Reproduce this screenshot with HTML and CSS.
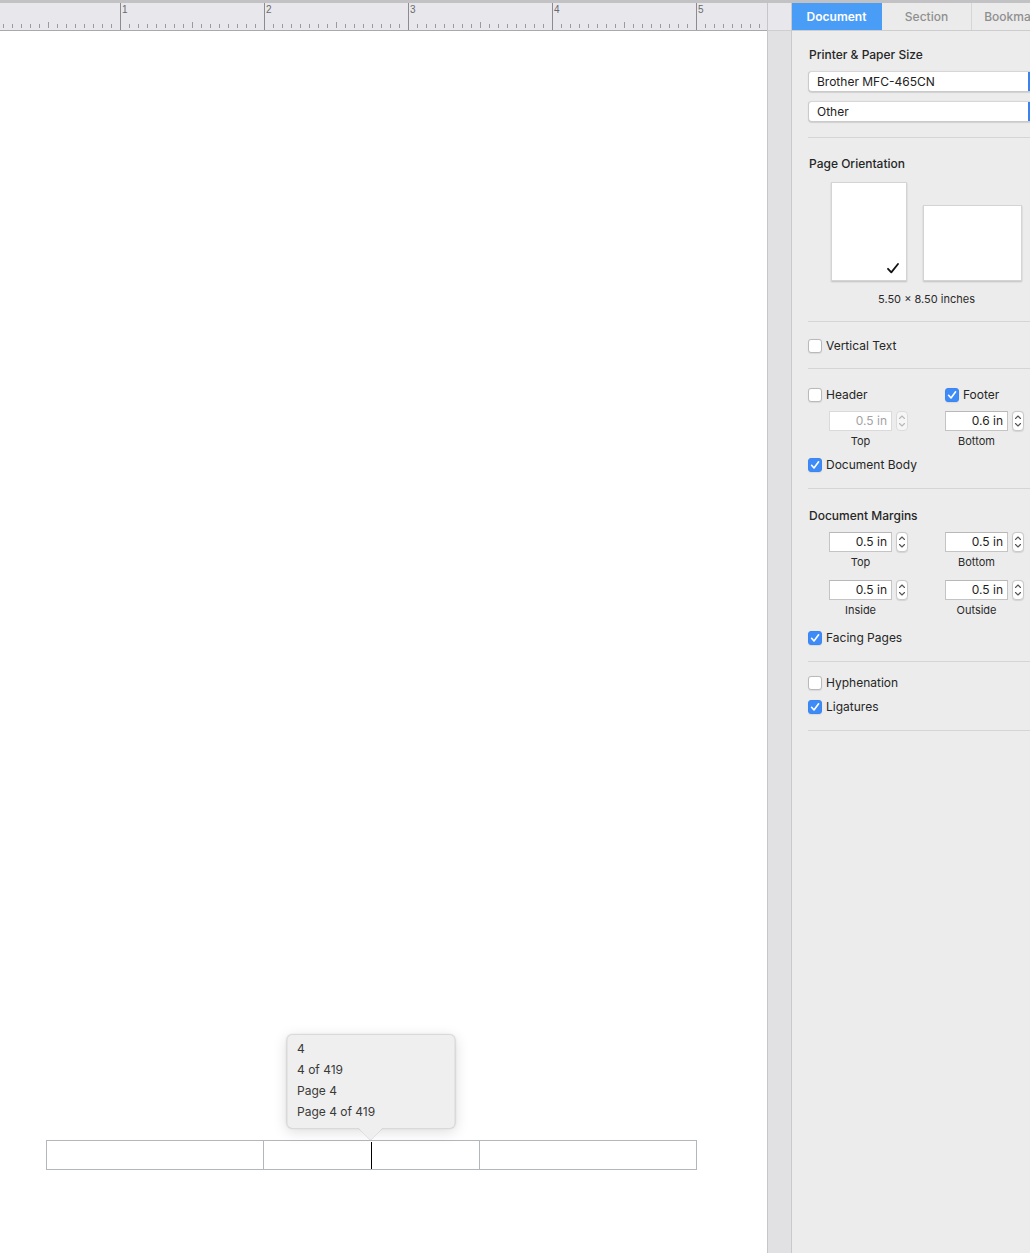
FILE: index.html
```html
<!DOCTYPE html>
<html>
<head>
<meta charset="utf-8">
<link rel="stylesheet" href="styles.css">
</head>
<body>
<div class="app">
  <div class="doc-col">
    <div class="ruler">
      <div class="ruler-lead"></div>
      <div class="inch"><span>1</span></div>
      <div class="inch"><span>2</span></div>
      <div class="inch"><span>3</span></div>
      <div class="inch"><span>4</span></div>
      <div class="inch last"><span>5</span></div>
    </div>
    <div class="page">
      <div class="footer-table">
        <div class="cell first"></div>
        <div class="cell mid">
          <span class="caret"></span>
          <div class="popover">
            <div class="pop-line">4</div>
            <div class="pop-line">4 of 419</div>
            <div class="pop-line">Page 4</div>
            <div class="pop-line">Page 4 of 419</div>
            <svg class="pop-arrow" width="24" height="12" viewBox="0 0 24 12"><path d="M0 0 L24 0 L13 11.5 Q12 12.5 11 11.5 Z" fill="#efefef"/><path d="M0 0.5 L11 11.5 Q12 12.5 13 11.5 L24 0.5" fill="none" stroke="rgba(0,0,0,0.08)" stroke-width="1"/></svg>
          </div>
        </div>
        <div class="cell last"></div>
      </div>
    </div>
  </div>
  <div class="gutter">
    <div class="gutter-top"></div>
  </div>
  <div class="panel">
    <div class="tabs">
      <div class="tab active">Document</div>
      <div class="tab">Section</div>
      <div class="tab">Bookmarks</div>
    </div>
    <div class="panel-body">
      <div class="title t-printer">Printer &amp; Paper Size</div>
      <div class="popup p1"><span class="popup-text">Brother MFC-465CN</span><span class="popup-arrow"></span></div>
      <div class="popup p2"><span class="popup-text">Other</span><span class="popup-arrow"></span></div>
      <div class="sep s1"></div>

      <div class="title t-orient">Page Orientation</div>
      <div class="orient">
        <div class="thumbs">
          <div class="thumb portrait">
            <svg class="tick" width="12" height="11" viewBox="0 0 12 11"><path d="M1 5.8 L4.3 9.4 L11 1" fill="none" stroke="#111" stroke-width="1.8" stroke-linecap="round" stroke-linejoin="round"/></svg>
          </div>
          <div class="thumb landscape"></div>
        </div>
        <div class="caption">5.50 × 8.50 inches</div>
      </div>
      <div class="sep s2"></div>

      <label class="check r-vertical"><span class="box"></span>Vertical Text</label>
      <div class="sep s3"></div>

      <div class="grid2 r-hf">
        <label class="check"><span class="box"></span>Header</label>
        <label class="check"><span class="box on"><svg width="14" height="14" viewBox="0 0 14 14"><path d="M3.6 7.3 L6 10 L10.6 3.8" fill="none" stroke="#fff" stroke-width="1.6" stroke-linecap="round" stroke-linejoin="round"/></svg></span>Footer</label>
      </div>
      <div class="grid2 r-fields1">
        <div class="fieldgroup indent">
          <div class="fieldrow"><span class="field disabled">0.5 in</span><span class="stepper dim"><svg width="12" height="20" viewBox="0 0 12 20"><path d="M3.5 7.5 L6 5 L8.5 7.5 M3.5 12.5 L6 15 L8.5 12.5" fill="none" stroke="#b8b8b8" stroke-width="1.1" stroke-linecap="round" stroke-linejoin="round"/></svg></span></div>
          <div class="flabel">Top</div>
        </div>
        <div class="fieldgroup">
          <div class="fieldrow"><span class="field">0.6 in</span><span class="stepper"><svg width="12" height="20" viewBox="0 0 12 20"><path d="M3.5 7.5 L6 5 L8.5 7.5 M3.5 12.5 L6 15 L8.5 12.5" fill="none" stroke="#555" stroke-width="1.1" stroke-linecap="round" stroke-linejoin="round"/></svg></span></div>
          <div class="flabel">Bottom</div>
        </div>
      </div>
      <label class="check r-body"><span class="box on"><svg width="14" height="14" viewBox="0 0 14 14"><path d="M3.6 7.3 L6 10 L10.6 3.8" fill="none" stroke="#fff" stroke-width="1.6" stroke-linecap="round" stroke-linejoin="round"/></svg></span>Document Body</label>
      <div class="sep s4"></div>

      <div class="title t-margins">Document Margins</div>
      <div class="grid2 r-fields2">
        <div class="fieldgroup indent">
          <div class="fieldrow"><span class="field">0.5 in</span><span class="stepper"><svg width="12" height="20" viewBox="0 0 12 20"><path d="M3.5 7.5 L6 5 L8.5 7.5 M3.5 12.5 L6 15 L8.5 12.5" fill="none" stroke="#555" stroke-width="1.1" stroke-linecap="round" stroke-linejoin="round"/></svg></span></div>
          <div class="flabel">Top</div>
        </div>
        <div class="fieldgroup">
          <div class="fieldrow"><span class="field">0.5 in</span><span class="stepper"><svg width="12" height="20" viewBox="0 0 12 20"><path d="M3.5 7.5 L6 5 L8.5 7.5 M3.5 12.5 L6 15 L8.5 12.5" fill="none" stroke="#555" stroke-width="1.1" stroke-linecap="round" stroke-linejoin="round"/></svg></span></div>
          <div class="flabel">Bottom</div>
        </div>
      </div>
      <div class="grid2 r-fields3">
        <div class="fieldgroup indent">
          <div class="fieldrow"><span class="field">0.5 in</span><span class="stepper"><svg width="12" height="20" viewBox="0 0 12 20"><path d="M3.5 7.5 L6 5 L8.5 7.5 M3.5 12.5 L6 15 L8.5 12.5" fill="none" stroke="#555" stroke-width="1.1" stroke-linecap="round" stroke-linejoin="round"/></svg></span></div>
          <div class="flabel">Inside</div>
        </div>
        <div class="fieldgroup">
          <div class="fieldrow"><span class="field">0.5 in</span><span class="stepper"><svg width="12" height="20" viewBox="0 0 12 20"><path d="M3.5 7.5 L6 5 L8.5 7.5 M3.5 12.5 L6 15 L8.5 12.5" fill="none" stroke="#555" stroke-width="1.1" stroke-linecap="round" stroke-linejoin="round"/></svg></span></div>
          <div class="flabel">Outside</div>
        </div>
      </div>
      <label class="check r-facing"><span class="box on"><svg width="14" height="14" viewBox="0 0 14 14"><path d="M3.6 7.3 L6 10 L10.6 3.8" fill="none" stroke="#fff" stroke-width="1.6" stroke-linecap="round" stroke-linejoin="round"/></svg></span>Facing Pages</label>
      <div class="sep s5"></div>

      <label class="check r-hyph"><span class="box"></span>Hyphenation</label>
      <label class="check r-lig"><span class="box on"><svg width="14" height="14" viewBox="0 0 14 14"><path d="M3.6 7.3 L6 10 L10.6 3.8" fill="none" stroke="#fff" stroke-width="1.6" stroke-linecap="round" stroke-linejoin="round"/></svg></span>Ligatures</label>
      <div class="sep s6"></div>
    </div>
  </div>
</div>
</body>
</html>
```
FILE: styles.css
```css
* { box-sizing: border-box; }
html, body { margin: 0; padding: 0; }
body {
  font-family: Inter, "Noto Sans", "Liberation Sans", sans-serif;
  font-size: 12px;
  color: #262626;
  background: #ececec;
  overflow: hidden;
}
.app {
  display: flex;
  width: 1030px;
  height: 1253px;
  border-top: 3px solid #c2c2c4;
  overflow: hidden;
}

/* document column */
.doc-col {
  width: 767px;
  flex: none;
  display: flex;
  flex-direction: column;
  background: #fff;
}
.ruler {
  height: 28px;
  flex: none;
  display: flex;
  overflow: hidden;
  border-bottom: 1px solid #a9a9ad;
  background-color: #e8e8ec;
  background-image:
    repeating-linear-gradient(to right, #9b9b9f 0 1px, transparent 1px 144px),
    repeating-linear-gradient(to right, #9b9b9f 0 1px, transparent 1px 9px);
  background-size: 864px 6px, 810px 4px;
  background-position: 48px calc(100% - 2px), 3px calc(100% - 2px);
  background-repeat: repeat-x;
}
.ruler-lead { width: 120px; flex: none; }
.inch {
  width: 144px;
  flex: none;
  border-left: 1px solid #8c8c90;
  padding: 1px 0 0 1px;
  font-size: 10px;
  line-height: 12px;
  color: #6a6a6e;
  font-family: "Liberation Sans", Arial, sans-serif;
}
.inch.last { width: 71px; }
.page {
  flex: 1;
  background: #fff;
  padding: 1109px 0 0 46px;
}
.footer-table {
  display: flex;
  width: 651px;
  height: 30px;
  border: 1px solid #b3b7bb;
}
.cell { flex: none; }
.cell.first { width: 216px; }
.cell.mid {
  width: 217px;
  border-left: 1px solid #b3b7bb;
  border-right: 1px solid #b3b7bb;
  position: relative;
  display: flex;
  justify-content: center;
  align-items: center;
}
.cell.last { flex: 1; }
.caret {
  width: 1px;
  height: 27px;
  background: #000;
  margin-right: 1px;
}
.popover {
  position: absolute;
  left: 50%;
  bottom: calc(100% + 12px);
  transform: translateX(-50%);
  margin-left: -1px;
  width: 169px;
  height: 95px;
  padding: 3px 0 0 10px;
  background: #efefef;
  border-radius: 6px;
  border: 1px solid rgba(0,0,0,0.09);
  box-shadow: 0 3px 14px rgba(0,0,0,0.13), 0 0 2px rgba(0,0,0,0.08);
  color: #3a3a3a;
}
.pop-line {
  font-size: 12px;
  line-height: 21px;
}
.pop-arrow {
  position: absolute;
  left: 50%;
  bottom: -12px;
  transform: translateX(-50%);
  display: block;
}

/* gutter */
.gutter {
  width: 25px;
  flex: none;
  background: #e1e1e4;
  border-left: 1px solid #c6c6ca;
  border-right: 1px solid #c9c9cb;
}
.gutter-top {
  height: 28px;
  background: #e8e8ec;
  border-bottom: 1px solid #cfcfd2;
}

/* panel */
.panel {
  flex: 1;
  min-width: 0;
  background: #ececec;
  overflow: hidden;
}
.tabs {
  display: flex;
  height: 28px;
  border-bottom: 1px solid #cdcdcd;
}
.tab {
  width: 90px;
  flex: none;
  text-align: center;
  line-height: 27px;
  font-size: 12px;
  font-weight: 500;
  color: #8f8f8f;
  background: #ebebeb;
  border-right: 1px solid #d6d6d6;
}
.tab.active {
  background: #4a9df6;
  color: #fff;
  font-weight: 600;
  border-right: 1px solid #4a9df6;
}
.panel-body {
  padding-left: 16px;
  display: flex;
  flex-direction: column;
  align-items: flex-start;
}
.title {
  font-size: 12px;
  font-weight: 500;
  line-height: 16px;
  color: #262626;
  padding-left: 1px;
}
.t-printer { margin-top: 16px; }
.popup {
  width: 241px;
  height: 21px;
  flex: none;
  display: flex;
  background: #fff;
  border-radius: 4px;
  border: 1px solid #cacaca;
  border-top-color: #d6d6d6;
  box-shadow: 0 0.5px 1px rgba(0,0,0,0.12);
  overflow: hidden;
}
.popup-text {
  flex: 1;
  padding-left: 8px;
  line-height: 19px;
  color: #222;
}
.popup-arrow {
  width: 20px;
  background: #3b82f0;
}
.p1 { margin-top: 8px; }
.p2 { margin-top: 9px; }
.sep {
  align-self: stretch;
  height: 1px;
  background: #d5d5d5;
  flex: none;
}
.s1 { margin-top: 15px; }
.t-orient { margin-top: 18px; }
.orient {
  margin-top: 10px;
  margin-left: 23px;
  display: flex;
  flex-direction: column;
  align-items: center;
}
.thumbs {
  display: flex;
  align-items: flex-end;
  gap: 16px;
}
.thumb {
  background: #fff;
  border: 1px solid #d4d4d4;
  box-shadow: 0 1px 1.5px rgba(0,0,0,0.18);
  position: relative;
}
.portrait { width: 76px; height: 99px; }
.landscape { width: 99px; height: 76px; }
.tick {
  position: absolute;
  left: 55px;
  top: 80px;
}
.caption {
  margin-top: 11px;
  font-size: 11px;
  line-height: 14px;
  color: #2a2a2a;
}
.s2 { margin-top: 15px; }
.check {
  display: flex;
  align-items: center;
  gap: 4px;
  height: 16px;
  line-height: 16px;
  color: #262626;
}
.box {
  width: 14px;
  height: 14px;
  flex: none;
  border-radius: 3px;
  background: #fff;
  border: 1px solid #b9b9b9;
  box-shadow: 0 0.5px 1px rgba(0,0,0,0.08);
  display: flex;
  align-items: center;
  justify-content: center;
}
.box.on {
  background: #3e8bf7;
  border-color: #3a86f2;
}
.box svg { display: block; flex: none; }
.r-vertical { margin-top: 16px; }
.s3 { margin-top: 14px; }
.grid2 {
  display: grid;
  grid-template-columns: 137px 85px;
}
.r-hf { margin-top: 18px; }
.fieldgroup {
  display: flex;
  flex-direction: column;
  align-items: flex-start;
}
.fieldgroup.indent { padding-left: 21px; }
.fieldrow {
  display: flex;
  align-items: center;
  gap: 4px;
}
.field {
  width: 63px;
  height: 20px;
  background: #fff;
  border: 1px solid #c4c4c4;
  border-top-color: #b8b8b8;
  text-align: right;
  padding-right: 4px;
  line-height: 18px;
  color: #1e1e1e;
}
.field.disabled {
  color: #a3a3a3;
  border-color: #dadada;
}
.stepper {
  width: 12px;
  height: 20px;
  border-radius: 4px;
  background: #fff;
  border: 1px solid #c9c9c9;
  box-shadow: 0 0.5px 1px rgba(0,0,0,0.1);
  display: flex;
  align-items: center;
  justify-content: center;
  overflow: hidden;
}
.stepper svg { flex: none; display: block; }
.stepper.dim { background: #f6f6f6; border-color: #dcdcdc; box-shadow: none; }
.flabel {
  width: 63px;
  text-align: center;
  font-size: 11px;
  line-height: 14px;
  margin-top: 3px;
  color: #2a2a2a;
}
.r-fields1 { margin-top: 8px; }
.r-body { margin-top: 9px; }
.s4 { margin-top: 15px; }
.t-margins { margin-top: 19px; }
.r-fields2 { margin-top: 8px; }
.r-fields3 { margin-top: 11px; }
.r-facing { margin-top: 13px; }
.s5 { margin-top: 15px; }
.r-hyph { margin-top: 13px; }
.r-lig { margin-top: 8px; }
.s6 { margin-top: 15px; }
```
